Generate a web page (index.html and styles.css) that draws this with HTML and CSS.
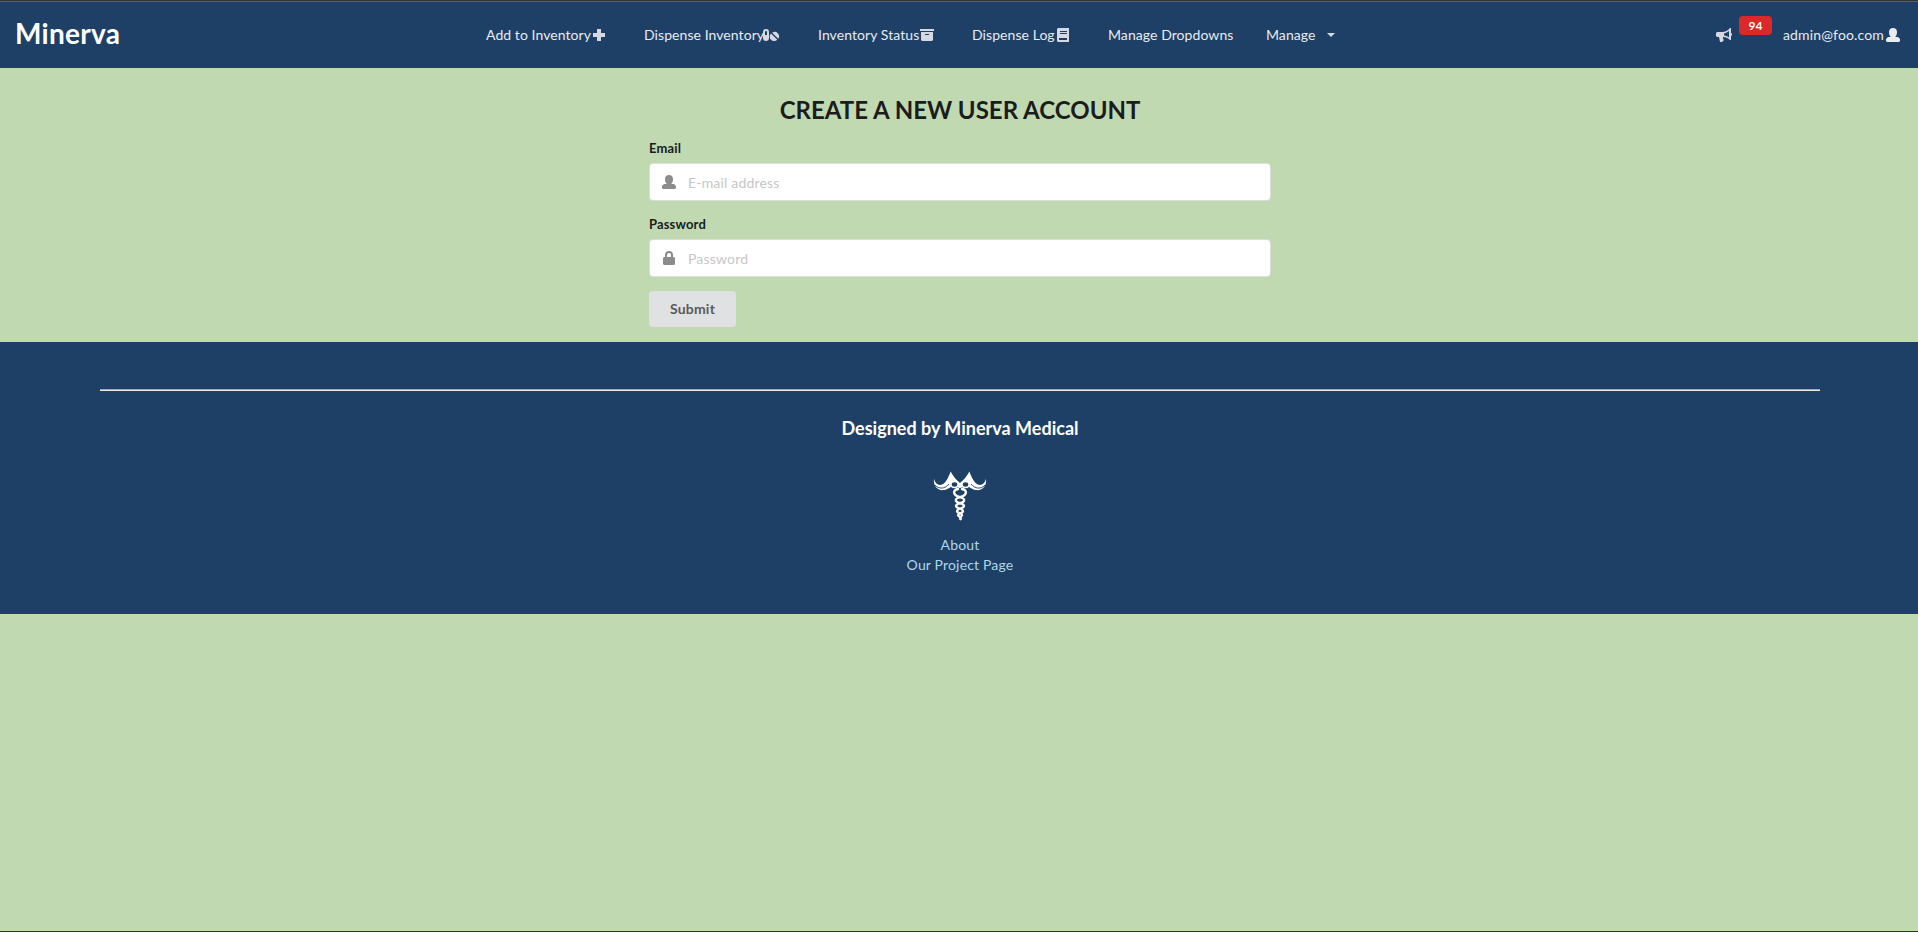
FILE: index.html
```html
<!DOCTYPE html>
<html lang="en">
<head>
<meta charset="utf-8">
<title>Minerva</title>
<link rel="stylesheet" href="styles.css">
</head>
<body>
<header class="navbar">
  <a class="brand">Minerva</a>
  <nav class="menu">
    <a class="item item-add"><span>Add to Inventory</span><svg class="icon" width="12" height="12" viewBox="0 0 12 12"><path d="M4 0h4v4h4v4H8v4H4V8H0V4h4z"/></svg></a>
    <a class="item item-dispense"><span>Dispense Inventory</span><svg class="icon" width="16" height="12" viewBox="0 0 16 12"><path fill-rule="evenodd" d="M0 3a3 3 0 0 1 6 0v6a3 3 0 0 1-6 0zM2 3v3h2V3a1 1 0 0 0-2 0z"/><path d="M8 4.500l6.300 6.300A4.400 4.400 0 0 1 8 4.500zM9.200 3.700A4.400 4.400 0 0 1 15.300 9.800z"/></svg></a>
    <a class="item item-status"><span>Inventory Status</span><svg class="icon" width="14" height="12" viewBox="0 0 14 12"><path fill-rule="evenodd" d="M0 0h14v2H0zM1 3h12v8l-1 1H2l-1-1zM5 5v1h4V5z"/></svg></a>
    <a class="item item-log"><span>Dispense Log</span><svg class="icon" width="12" height="14" viewBox="0 0 12 14"><path fill-rule="evenodd" d="M1 0h11v14H1l-1-1V1zM3 3v1h7V3zM3 5v1h7V5zM2 10v2h8v-2z"/></svg></a>
    <a class="item item-dropdowns"><span>Manage Dropdowns</span></a>
    <a class="item item-manage"><span>Manage</span><svg class="icon" width="8" height="4" viewBox="0 0 8 4"><path d="M0 0h8L4 4z"/></svg></a>
  </nav>
  <div class="account">
    <svg class="icon horn" width="16" height="14" viewBox="0 0 16 14"><path fill-rule="evenodd" d="M14 0h1v5l1 .8v1.500l-1 .7v4h-1c-2-2-4-3-7-3 0 1.500 0 2.500 1 3L6 14H4L3 9H1L0 8V5l1-1h5c3 0 6-1.500 8-4zM13 3c-2 1.500-4 2.200-5 2.400v2.200c2 .2 4 1 5 2z"/></svg>
    <span class="badge">94</span>
    <span class="user">admin@foo.com</span>
    <svg class="icon" width="14" height="14" viewBox="0 0 14 14"><path d="M7 0c2.500 0 4 1.600 4 4 0 2-.6 3.500-1.500 4.500V9H12l2 2v2l-1 1H1l-1-1v-2l2-2h2.500v-.5C3.600 7.500 3 6 3 4c0-2.400 1.500-4 4-4z"/></svg>
  </div>
</header>
<main class="signup">
  <h2>CREATE A NEW USER ACCOUNT</h2>
  <form>
    <label>Email</label>
    <div class="field"><svg class="icon" width="14" height="14" viewBox="0 0 14 14"><path d="M7 0c2.500 0 4 1.600 4 4 0 2-.6 3.500-1.500 4.500V9H12l2 2v2l-1 1H1l-1-1v-2l2-2h2.500v-.5C3.600 7.500 3 6 3 4c0-2.400 1.500-4 4-4z"/></svg><input type="email" placeholder="E-mail address"></div>
    <label>Password</label>
    <div class="field"><svg class="icon" width="14" height="14" viewBox="0 0 14 14"><path fill-rule="evenodd" d="M3 6V4a4 4 0 0 1 8 0v2h1l1 1v6l-1 1H2l-1-1V7l1-1zm2 0h4V4a2 2 0 0 0-4 0z"/></svg><input type="password" placeholder="Password"></div>
    <button type="button">Submit</button>
  </form>
</main>
<footer class="footer">
  <hr>
  <h3>Designed by Minerva Medical</h3>
  <svg class="logo" width="54" height="52" viewBox="0 0 54 52" fill="none">
    <g fill="#fff">
      <path d="M1 7.500c1 6 6 8 10 5 3-3 5-8 6.700-12C20 5 23 9 27 12c4-3 7-7 9.300-11.500C38 4.500 40 9.500 43 12.500c4 3 9 1 10-5 1 8-4 12.500-10 11.500-5-.5-8-4-10-7-2 2-3 5-6 5s-4-3-6-5c-2 3-5 6.500-10 7C5 20 0 15.500 1 7.500z"/>
    </g>
    <g stroke="#1e3f66"><path d="M2 14c4 4.500 10 4 14-1M52 14c-4 4.500-10 4-14-1" stroke-width=".9"/></g>
    <g stroke="#fff" stroke-width="1.500">
      <ellipse cx="21.500" cy="13.500" rx="3.500" ry="3" fill="#1e3f66"/>
      <ellipse cx="32.500" cy="13.500" rx="3.500" ry="3" fill="#1e3f66"/>
    </g>
    <g stroke="#fff" stroke-width="2.300" stroke-linecap="round">
      <path d="M25 18c-5 1-5 5-1 7 4 1.500 8 2 7 5-1 2.500-8 2-8 5 0 2.500 7 2.500 7 5s-5 2-5 4c0 1.500 3 1 2.500 4"/>
      <path d="M29 18c5 1 5 5 1 7-4 1.500-8 2-7 5 1 2.500 8 2 8 5 0 2.500-7 2.500-7 5s5 2 5 4c0 1.500-2 1-1.500 4"/>
    </g>
  </svg>
  <a>About</a>
  <a>Our Project Page</a>
</footer>
</body>
</html>
```
FILE: styles.css
```css
* { box-sizing: border-box; }
body {
  margin: 0;
  height: 932px;
  overflow: hidden;
  background: #c1d9b1;
  border-bottom: 1px solid #17365d;
  font: 14px/20px Lato, "Liberation Sans", sans-serif;
  color: #1b1c1d;
}
.icon { display: block; flex: none; fill: currentColor; }
.navbar {
  display: flex;
  height: 68px;
  background: #1e3f66;
  border-top: 1px solid #2f3438;
  box-shadow: inset 0 1px #555f6a;
  color: #e8ebef;
}
.brand {
  width: 486px;
  padding: 14px 0 0 15px;
  font-size: 28px;
  line-height: 36px;
  font-weight: 700;
  letter-spacing: 0.3px;
  color: #fff;
}
.menu { display: flex; flex: 1; padding-top: 24px; }
.item { display: flex; align-items: center; height: 20px; white-space: nowrap; letter-spacing: 0.07px; }
.item .icon { color: #d5dae2; margin-left: 2px; }
.item-add { width: 158px; }
.item-dispense { width: 174px; }
.item-dispense .icon { margin-left: -1px; }
.item-status { width: 154px; }
.item-status .icon { margin-left: 1px; }
.item-log { width: 136px; }
.item-dropdowns { width: 158px; }
.item-manage .icon { margin-left: 11px; }
.account { display: flex; width: 202px; padding-top: 24px; height: 44px; align-items: center; }
.horn { color: #d5dae2; }
.badge {
  width: 33px;
  height: 19px;
  margin: -19px 11px 0 7px;
  border-radius: 4px;
  background: #db2828;
  color: #fff;
  font-size: 12px;
  line-height: 19px;
  font-weight: 700;
  text-align: center;
}
.user { width: 103px; letter-spacing: 0.15px; }
.signup { position: relative; left: 1px; height: 274px; width: 622px; margin: 0 auto; padding-top: 26px; }
h2 { margin: 0 0 13px; font-size: 24px; line-height: 31px; text-align: center; }
form { display: block; }
label { display: block; height: 20px; margin-bottom: 5px; font-size: 13px; line-height: 20px; font-weight: 700; letter-spacing: 0.15px; }
.field {
  display: flex;
  align-items: center;
  height: 38px;
  margin-bottom: 13px;
  padding-left: 12px;
  background: #fff;
  border: 1px solid #dcded9;
  border-radius: 4px;
  color: #8c8c8c;
}
input {
  flex: 1;
  margin-left: 12px;
  padding: 2px 0 0;
  border: 0;
  outline: 0;
  background: none;
  font: 14px/20px Lato, "Liberation Sans", sans-serif;
  letter-spacing: 0.18px;
}
input::placeholder { color: #c7c7c7; }
button {
  display: block;
  width: 87px;
  height: 36px;
  margin-top: 14px;
  padding: 0;
  border: 0;
  border-radius: 4px;
  background: #e0e1e2;
  color: #595a5b;
  font: 700 14px/20px Lato, "Liberation Sans", sans-serif;
  letter-spacing: 0.2px;
}
.field:last-of-type { margin-bottom: 0; }
.footer {
  display: flex;
  flex-direction: column;
  align-items: center;
  height: 272px;
  padding: 47px 0 0 2px;
  background: #1e3f66;
}
hr { width: 1720px; height: 2px; margin: 0; border: 0; border-top: 1px solid #a0a6ad; background: #eeeae5; }
h3 { margin: 26px 0 31px; font-size: 18px; line-height: 23px; color: #fff; }
.logo { display: block; margin-bottom: 12px; }
.footer a { color: #add8e6; letter-spacing: 0.17px; }
```
